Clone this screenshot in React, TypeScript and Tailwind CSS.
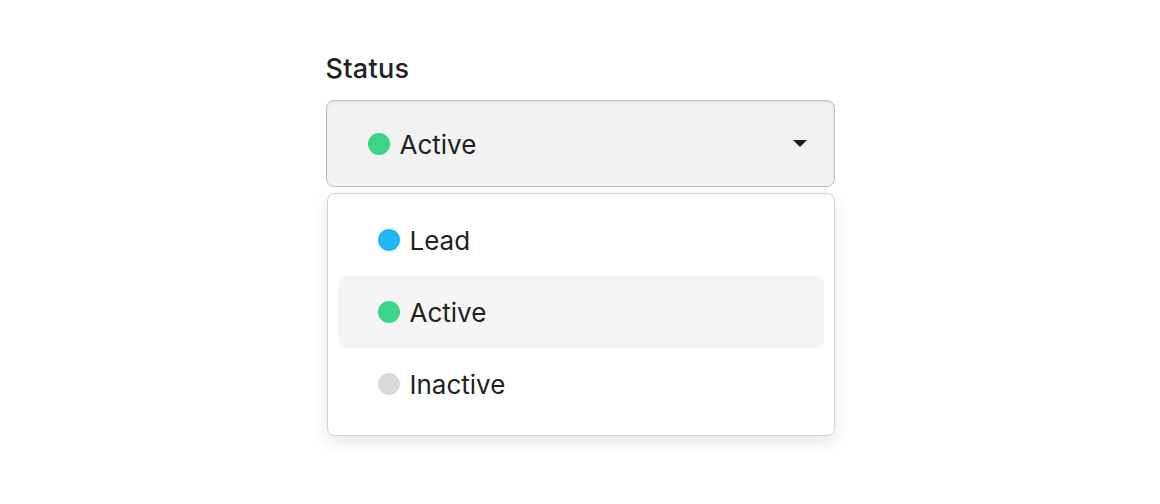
import { useState } from "react";

const options = [
  { label: "Lead", color: "bg-[#1fb8f6]" },
  { label: "Active", color: "bg-[#3bd48b]" },
  { label: "Inactive", color: "bg-[#d9d9d9]" },
];

export default function App() {
  const [value, setValue] = useState("Active");
  const [hovered, setHovered] = useState("Active");

  const current = options.find((o) => o.label === value) ?? options[1];

  return (
    <main
      className="min-h-screen bg-white flex justify-center text-[#222222]"
      style={{ fontFamily: "Inter, 'Noto Sans', sans-serif" }}
    >
      <div className="w-[509px] pt-[52px]">

        <h1 className="text-[27px] leading-[32px] font-medium tracking-[0.3px] pt-px">
          Status
        </h1>

        <button
          className="mt-[15px] w-full h-[87px] flex items-center justify-between pl-[41px] pr-[26px] rounded-lg border-[1.5px] border-[#bfbfbf] bg-[#f2f2f2] shadow-[inset_0_2px_3px_rgba(0,0,0,0.06)]"
        >
          <span className="flex items-center gap-[10px] text-[26px] leading-[32px]">
            <span className={`w-[22px] h-[22px] rounded-full ${current.color}`} />
            <span className="pt-[2px]">{current.label}</span>
          </span>
          <svg width="16" height="9" viewBox="0 0 16 9">
            <path d="M1 1 L15 1 L8 8 Z" fill="#1f1f1f" />
          </svg>
        </button>

        <div className="mt-[6px] ml-px rounded-lg border border-[#d2d2d2] bg-white pt-[10px] pb-[15px] px-[10px] shadow-[0_6px_16px_rgba(0,0,0,0.10)]">
          {options.map((o) => (
            <div
              key={o.label}
              onMouseEnter={() => setHovered(o.label)}
              onClick={() => setValue(o.label)}
              className={`h-[72px] flex items-center gap-[10px] pl-[40px] rounded-lg text-[26px] leading-[32px] cursor-pointer ${
                hovered === o.label ? "bg-[#f5f5f5]" : ""
              }`}
            >
              <span className={`w-[22px] h-[22px] rounded-full ${o.color}`} />
              <span className="pt-[2px]">{o.label}</span>
            </div>
          ))}
        </div>

      </div>
    </main>
  );
}
